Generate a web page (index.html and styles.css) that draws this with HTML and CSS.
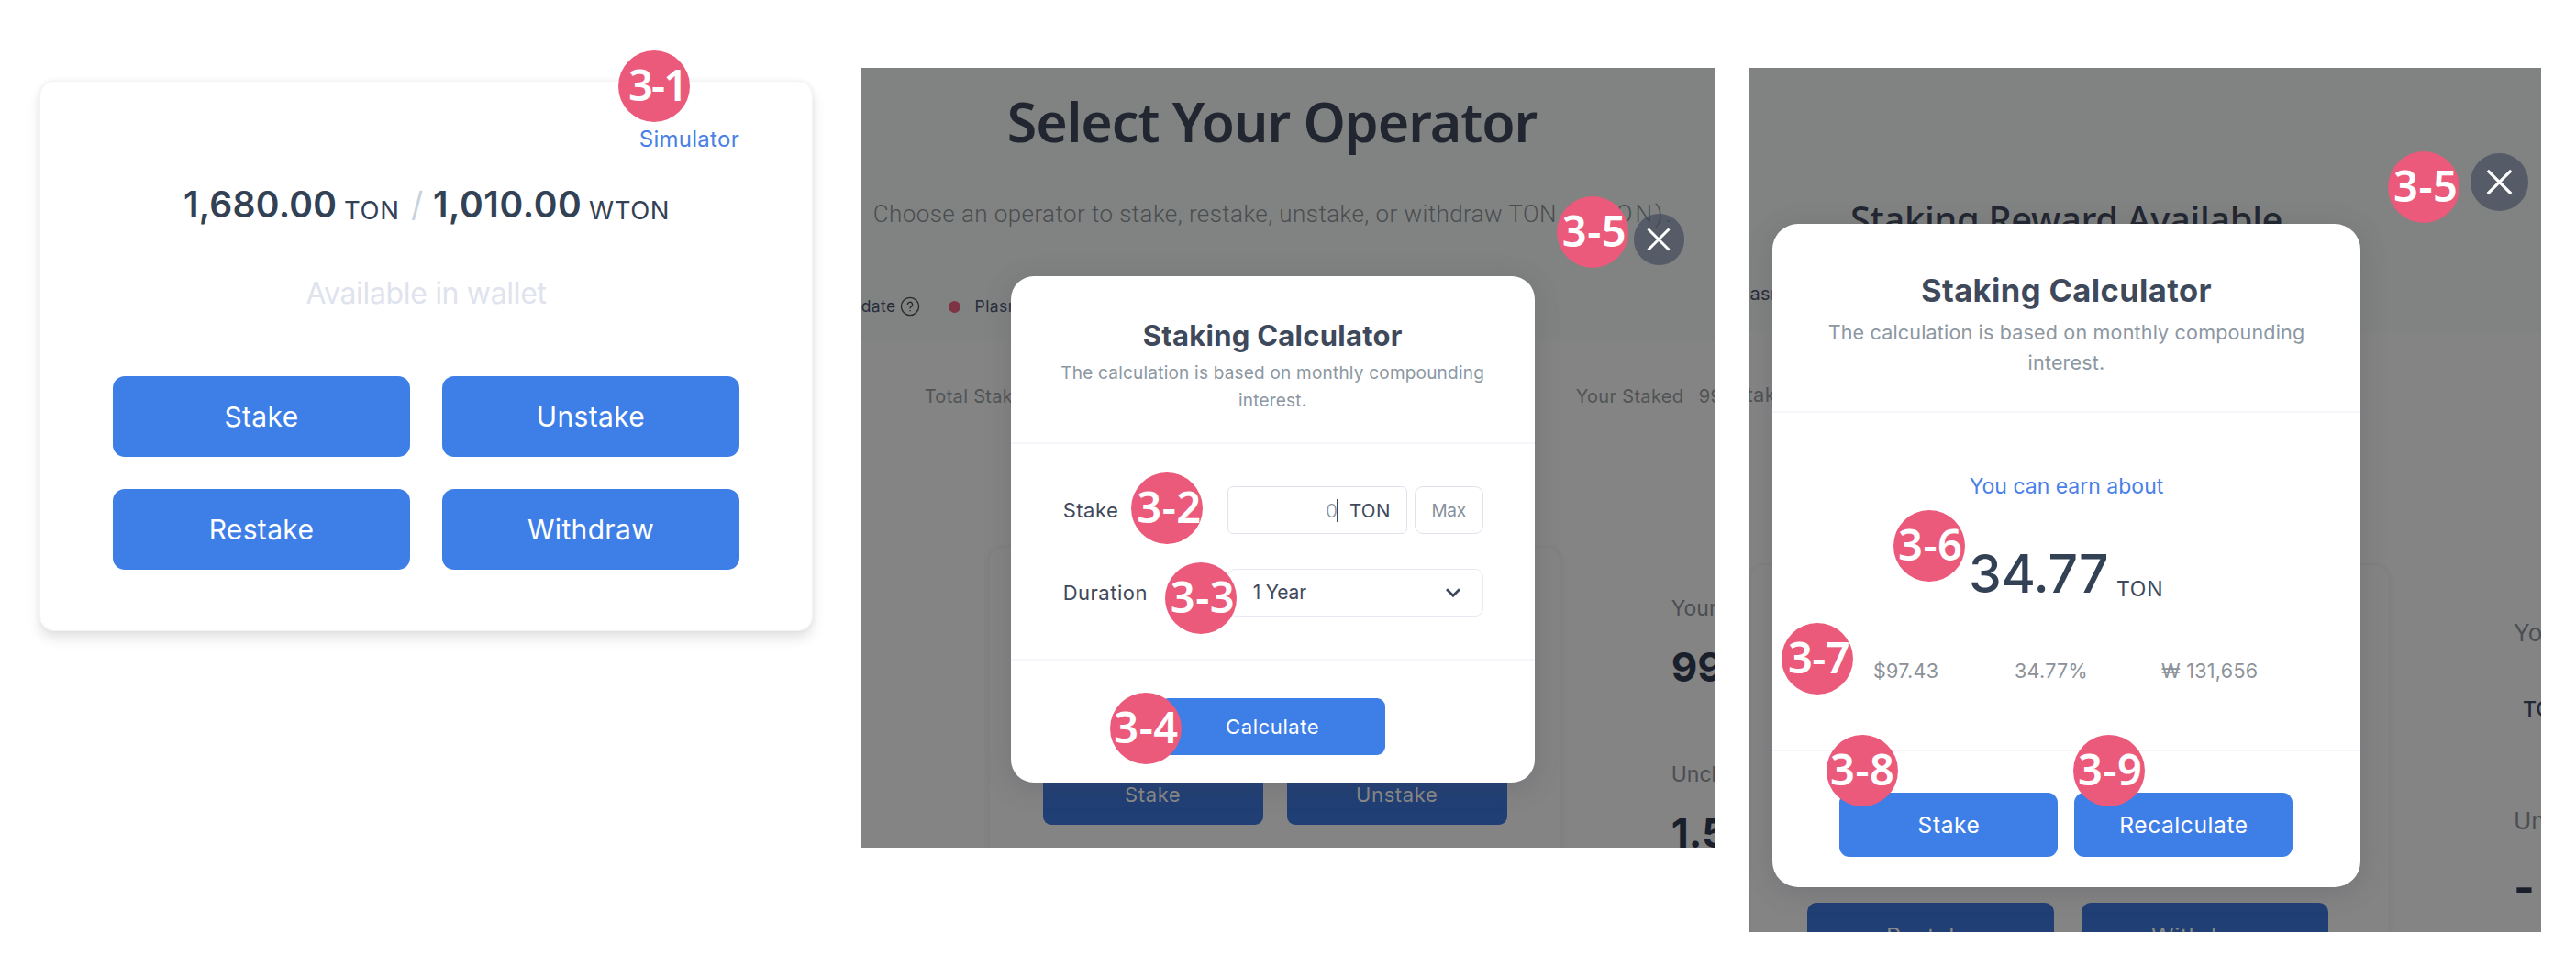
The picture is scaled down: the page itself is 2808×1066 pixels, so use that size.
FILE: index.html
```html
<!DOCTYPE html>
<html lang="en">
<head>
<meta charset="utf-8">
<title>Staking Simulator</title>
<link rel="stylesheet" href="styles.css">
</head>
<body>
<main class="board">

  <section class="wallet">
    <a class="wallet-link">Simulator</a>
    <div class="wallet-amount">
      <strong>1,680.00</strong><span class="unit">TON</span><span class="slash">/</span><strong>1,010.00</strong><span class="unit">WTON</span>
    </div>
    <p class="wallet-note">Available in wallet</p>
    <div class="wallet-actions">
      <button class="btn">Stake</button>
      <button class="btn">Unstake</button>
      <button class="btn">Restake</button>
      <button class="btn">Withdraw</button>
    </div>
    <span class="badge b1">3-1</span>
  </section>

  <section class="shot shot-form">
    <div class="backdrop">
      <header class="hero">
        <h1>Select Your Operator</h1>
        <p class="lead">Choose an operator to stake, restake, unstake, or withdraw TON <span class="token">(WTON).</span></p>
        <div class="legend">
          <span>date</span>
          <svg class="help" viewBox="0 0 22 22"><circle cx="11" cy="11" r="9.6"/><path d="M8.4 8.9a2.6 2.6 0 1 1 3.9 2.2c-.9.5-1.3 1-1.3 2.1"/><path d="M11 15v1.3"/></svg>
          <i class="dot"></i>
          <span>Plasma</span>
        </div>
      </header>
      <div class="stats"><span class="total">Total Staked</span><span class="yours">Your Staked</span><span>99</span></div>
      <div class="detail">
        <div class="panel">
          <button class="btn">Stake</button>
          <button class="btn">Unstake</button>
        </div>
        <div class="figures">
          <span class="cap">Your</span>
          <strong class="num">99</strong>
          <span class="cap cap-next">Uncl</span>
          <strong class="num">1.5</strong>
        </div>
      </div>
    </div>

    <div class="modal">
      <header class="modal-head">
        <h2>Staking Calculator</h2>
        <p>The calculation is based on monthly compounding interest.</p>
      </header>
      <div class="modal-body form">
        <div class="row">
          <label>Stake</label>
          <div class="controls">
            <div class="amount"><span class="zero">0</span><i class="caret"></i><span>TON</span></div>
            <button class="max">Max</button>
          </div>
        </div>
        <div class="row">
          <label>Duration</label>
          <div class="select"><span>1 Year</span><svg viewBox="0 0 18 12"><path d="M2 2.2l7 7 7-7"/></svg></div>
        </div>
      </div>
      <footer class="modal-foot"><button class="btn">Calculate</button></footer>
    </div>

    <span class="close"><svg viewBox="0 0 28 28"><path d="M2.5 2.5l23 23M25.5 2.5l-23 23"/></svg></span>
    <span class="badge b2">3-2</span>
    <span class="badge b3">3-3</span>
    <span class="badge b4">3-4</span>
    <span class="badge b5">3-5</span>
  </section>

  <section class="shot shot-result">
    <div class="backdrop">
      <header class="hero">
        <h1>Staking Reward Available</h1>
        <div class="legend"><span>Plasma</span></div>
      </header>
      <div class="stats"><span>Total Staked</span></div>
      <div class="detail">
        <div class="panel">
          <button class="btn">Restake</button>
          <button class="btn">Withdraw</button>
        </div>
        <div class="figures">
          <span class="cap">Your</span>
          <span class="ton">TON</span>
          <span class="cap cap-next">Uncl</span>
          <strong class="num">-</strong>
        </div>
      </div>
    </div>

    <div class="modal">
      <header class="modal-head">
        <h2>Staking Calculator</h2>
        <p>The calculation is based on monthly compounding interest.</p>
      </header>
      <div class="modal-body result">
        <p class="earn">You can earn about</p>
        <div class="reward"><span>34.77</span><small>TON</small></div>
        <div class="rates"><span>$97.43</span><span>34.77%</span><span>₩ 131,656</span></div>
      </div>
      <footer class="modal-foot">
        <button class="btn">Stake</button>
        <button class="btn">Recalculate</button>
      </footer>
    </div>

    <span class="close"><svg viewBox="0 0 28 28"><path d="M2.5 2.5l23 23M25.5 2.5l-23 23"/></svg></span>
    <span class="badge r5">3-5</span>
    <span class="badge r6">3-6</span>
    <span class="badge r7">3-7</span>
    <span class="badge r8">3-8</span>
    <span class="badge r9">3-9</span>
  </section>

</main>
</body>
</html>
```
FILE: styles.css
```css
* { box-sizing: border-box; }
body {
  margin: 0;
  background: #fff;
  color: #3e495c;
  font-family: Inter, "Noto Sans CJK KR", sans-serif;
}
h1, h2, p { margin: 0; }
button { font: inherit; border: 0; padding: 0; }

.board {
  display: flex;
  align-items: flex-start;
  width: 2808px;
  height: 1066px;
  padding-left: 43px;
  overflow: hidden;
}

.btn {
  background: #3e7ee7;
  color: #fff;
  font-weight: 430;
  text-align: center;
}

/* numbered markers */
.badge {
  position: absolute;
  width: 78px;
  height: 78px;
  padding-left: 6px;
  border-radius: 50%;
  background: #eb5a7a;
  color: #fff;
  font: 600 47px/75px "Noto Sans", sans-serif;
  letter-spacing: .6px;
  white-space: nowrap;
}
.b1 { left: 630px; top: -34px; padding-left: 11px; letter-spacing: -1.8px; }
.b2 { left: 295.5px; top: 440.5px; }
.b3 { left: 332px; top: 539px; }
.b4 { left: 272.5px; top: 681px; padding-left: 4px; }
.b5 { left: 759px; top: 139.5px; }
.r5 { left: 696px; top: 91px; }
.r6 { left: 157px; top: 482px; padding-left: 5px; }
.r7 { left: 35px; top: 604.5px; padding-left: 7px; letter-spacing: -.6px; }
.r8 { left: 84px; top: 727px; padding-left: 4px; }
.r9 { left: 353px; top: 727px; padding-left: 5px; }

/* wallet card */
.wallet {
  position: relative;
  flex: none;
  width: 843px;
  height: 600px;
  margin-top: 88px;
  padding: 48px 79px 0;
  border: 1px solid #f4f4f6;
  border-radius: 16px;
  background: #fff;
  box-shadow: 0 8px 14px rgba(0, 0, 0, .11), 0 0 6px rgba(0, 0, 0, .05);
}
.wallet-link {
  display: block;
  color: #4a7fe6;
  font-size: 24px;
  line-height: 30px;
  letter-spacing: .28px;
  text-align: right;
}
.wallet-amount {
  display: grid;
  grid-template-columns: 175px 73px 24px 170px auto;
  height: 48px;
  margin-top: 32px;
  padding-left: 77px;
  color: #334155;
  line-height: 48px;
}
.wallet-amount strong { font-size: 39px; font-weight: 600; letter-spacing: .25px; }
.wallet-amount strong:nth-of-type(2) { letter-spacing: .6px; }
.unit { margin-top: 6px; font-size: 27.5px; font-weight: 430; letter-spacing: .6px; }
.slash { color: #c9d3dd; font-size: 37px; }
.wallet-note {
  margin-top: 53px;
  color: #dfe3ee;
  font-size: 32px;
  line-height: 40px;
  letter-spacing: -.34px;
  text-align: center;
}
.wallet-actions {
  display: grid;
  grid-template-columns: 324px 324px;
  gap: 35px;
  justify-content: center;
  margin-top: 70px;
}
.wallet-actions .btn {
  height: 88px;
  border-radius: 13px;
  font-size: 30px;
  letter-spacing: .35px;
}

/* dimmed pages behind the dialogs */
.shot { position: relative; flex: none; margin-top: 74px; }
.shot-form { width: 931px; height: 849.5px; margin-left: 51.7px; }
.shot-result { width: 863px; height: 941.5px; margin-left: 38.3px; }
.backdrop {
  height: 100%;
  overflow: hidden;
  background: #848484;
  white-space: nowrap;
}
.hero { background: #818382; overflow: hidden; }
.hero h1 { color: #222630; font-family: "Noto Sans", sans-serif; font-weight: 600; }
.lead {
  padding-left: 14px;
  color: #4a4d50;
  font: 300 26px/34px Roboto, sans-serif;
  letter-spacing: .42px;
}
.token { margin-left: 2px; letter-spacing: 3px; }
.legend { display: flex; align-items: center; color: #282c3a; line-height: 24px; }
.help { width: 22px; height: 22px; margin-left: 4px; fill: none; stroke: #26292b; stroke-width: 1.3; }
.dot { width: 13px; height: 13px; margin: 0 16px 0 31px; border-radius: 50%; background: #7e3344; }
.stats { display: flex; color: #505456; line-height: 26px; }
.stats span { flex: none; }
.detail { display: flex; align-items: flex-start; }
.panel {
  display: flex;
  flex: none;
  align-items: flex-start;
  border: 2px solid #808080;
  border-radius: 16px;
  box-shadow: 0 4px 8px rgba(0, 0, 0, .05);
}
.panel .btn { background: #203f75; color: #8b8a88; }
.figures { display: flex; flex-direction: column; }
.cap { color: #4b4f53; }
.num { color: #19202c; font-weight: 700; line-height: 50px; }

.shot-form .hero { height: 297px; padding-top: 18px; }
.shot-form h1 { padding-left: 160px; font-size: 59px; line-height: 80px; letter-spacing: -1px; }
.shot-form .lead { margin-top: 44px; }
.shot-form .legend { margin-top: 72px; padding-left: 1px; font-size: 17.5px; letter-spacing: .4px; }
.shot-form .stats { margin-top: 48px; padding-left: 70px; font-size: 20px; letter-spacing: .31px; }
.shot-form .total { width: 710px; }
.shot-form .yours { width: 134px; }
.shot-form .detail { margin-top: 150px; padding-left: 139px; }
.shot-form .panel { width: 625px; height: 700px; padding: 236px 0 0 58px; gap: 26px; }
.shot-form .panel .btn { width: 240px; height: 66px; border-radius: 9px; font-size: 22px; letter-spacing: .6px; }
.shot-form .figures { margin-left: 120px; padding-top: 54px; }
.shot-form .cap { font-size: 23px; line-height: 28px; }
.shot-form .num { margin-top: 25px; font-size: 44px; }
.shot-form .cap-next { margin-top: 78px; }

.shot-result .hero { height: 288.7px; padding-top: 137px; }
.shot-result h1 { padding-left: 110px; font-size: 40px; font-weight: 500; line-height: 56px; letter-spacing: -.4px; }
.shot-result .legend { margin: 41px 0 0 -18px; font-size: 20px; letter-spacing: .4px; }
.shot-result .stats { margin: 54px 0 0 -77px; font-size: 22px; letter-spacing: .35px; }
.shot-result .detail { margin-top: 171px; }
.shot-result .panel { width: 698px; height: 700px; padding: 368px 0 0 61px; gap: 30px; }
.shot-result .panel .btn { width: 269px; height: 74px; border-radius: 10px; font-size: 25px; letter-spacing: .5px; }
.shot-result .figures { margin-left: 135px; padding-top: 61px; }
.shot-result .cap { font-size: 26px; line-height: 30px; }
.shot-result .ton { margin: 53px 0 0 10px; color: #222836; font-size: 23px; font-weight: 500; line-height: 30px; }
.shot-result .cap-next { margin-top: 92px; }
.shot-result .num { margin-top: 33px; font-size: 49px; }

/* dialog */
.modal {
  position: absolute;
  display: flex;
  flex-direction: column;
  background: #fff;
  box-shadow: 0 5px 28px rgba(70, 70, 90, .25);
}
.modal-head { border-bottom: 2px solid #f5f6f9; text-align: center; }
.modal-head h2 { font-weight: 650; }
.modal-head p { color: #8c97a2; }
.modal-body { border-bottom: 2px solid #f5f6f9; }
.modal-foot { display: flex; justify-content: center; }

.shot-form .modal { left: 164px; top: 227px; width: 571px; height: 551.5px; border-radius: 25px; }
.shot-form .modal-head { height: 183px; padding: 45px 50px 0; }
.shot-form h2 { font-size: 31px; line-height: 40px; letter-spacing: .25px; }
.shot-form .modal-head p { margin-top: 6px; font-size: 19px; line-height: 29.6px; letter-spacing: .21px; }
.form { display: flex; flex-direction: column; gap: 37.5px; height: 236px; padding: 46px 56px 0; }
.row { display: flex; align-items: center; justify-content: space-between; height: 52px; }
.row label { padding-left: 1px; font-size: 22px; font-weight: 430; letter-spacing: .5px; }
.controls { display: flex; gap: 8px; }
.amount, .max, .select {
  display: flex;
  align-items: center;
  height: 52px;
  border: 1.5px solid #dfe3ee;
  background: #fff;
}
.amount { justify-content: flex-end; width: 196px; padding-right: 17px; border-radius: 6px; font-size: 20.5px; letter-spacing: .35px; }
.zero { color: #86909c; font-weight: 300; letter-spacing: -1px; }
.caret { width: 2px; height: 25px; margin-right: 12px; background: #3e495c; }
.max { justify-content: center; width: 75px; border-radius: 9px; color: #86909c; font-size: 19px; letter-spacing: -.2px; }
.select { justify-content: space-between; width: 279px; padding: 0 23px 0 27px; border-color: #e7eaf2; border-radius: 9px; font-size: 21px; letter-spacing: -.17px; }
.select svg { width: 18px; height: 12px; fill: none; stroke: #3e495c; stroke-width: 2.8; }
.shot-form .modal-foot { padding-top: 41px; }
.shot-form .modal-foot .btn { width: 245px; height: 62px; border-radius: 9px; font-size: 22px; letter-spacing: .6px; }

.shot-result .modal { left: 25px; top: 170px; width: 641px; height: 722.7px; border-radius: 28px; }
.shot-result .modal-head { height: 205.5px; padding: 51px 55px 0; }
.shot-result h2 { font-size: 34.5px; line-height: 44px; letter-spacing: .4px; }
.shot-result .modal-head p { margin-top: 7px; font-size: 21.5px; line-height: 32.8px; letter-spacing: .18px; }
.result { height: 369.5px; padding-top: 65px; }
.earn { color: #4a80e8; font-size: 23px; line-height: 30px; text-align: center; }
.reward { display: flex; height: 86px; margin-top: 46px; padding-left: 214px; color: #334155; line-height: 70px; }
.reward span { width: 161px; font-size: 57px; font-weight: 450; letter-spacing: -.3px; }
.reward small { margin-top: 16px; color: #3e495c; font-size: 23px; font-weight: 430; letter-spacing: .7px; }
.rates {
  display: grid;
  grid-template-columns: 154px 160px auto;
  margin-top: 39px;
  padding-left: 110px;
  color: #8b9299;
  font-size: 21.5px;
  line-height: 30px;
  letter-spacing: .3px;
}
.shot-result .modal-foot { gap: 18px; padding: 45px 0 0; }
.shot-result .modal-foot .btn { width: 238px; height: 70px; border-radius: 11px; font-size: 24.5px; letter-spacing: .6px; }

.close {
  position: absolute;
  display: flex;
  align-items: center;
  justify-content: center;
  border-radius: 50%;
  background: rgba(62, 70, 90, .65);
}
.close svg { fill: none; stroke: #fff; stroke-width: 2.9; }
.shot-form .close { left: 843px; top: 159px; width: 55.5px; height: 55.5px; }
.shot-form .close svg { width: 28px; height: 28px; }
.shot-result .close { left: 786.5px; top: 93px; width: 62.5px; height: 62.5px; }
.shot-result .close svg { width: 31px; height: 31px; }
```
